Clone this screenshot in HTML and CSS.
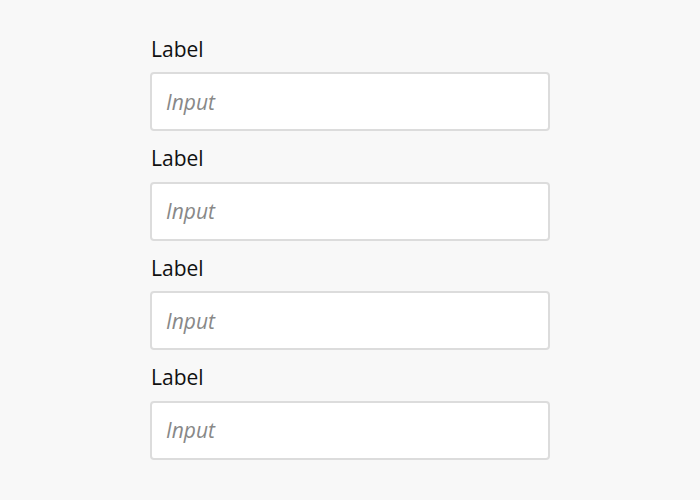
FILE: index.html
```html
<!DOCTYPE html>
<html>
<head>
<meta charset="utf-8">
<link rel="stylesheet" href="styles.css">
</head>
<body>
<form class="form">
  <div class="field">
    <label class="label">Label</label>
    <input class="input" type="text" placeholder="Input">
  </div>
  <div class="field">
    <label class="label">Label</label>
    <input class="input" type="text" placeholder="Input">
  </div>
  <div class="field">
    <label class="label">Label</label>
    <input class="input" type="text" placeholder="Input">
  </div>
  <div class="field">
    <label class="label">Label</label>
    <input class="input" type="text" placeholder="Input">
  </div>
</form>
</body>
</html>
```
FILE: styles.css
```css
html, body {
  margin: 0;
  padding: 0;
  background: #f8f8f8;
  font-family: "Open Sans", "Liberation Sans", sans-serif;
}
.form {
  width: 400px;
  margin: 0 auto;
  padding-top: 35.5px;
  display: flex;
  flex-direction: column;
  gap: 14.17px;
}
.field {
  display: flex;
  flex-direction: column;
}
.label {
  font-size: 21px;
  line-height: 26px;
  color: #111;
  margin: 0 0 10.5px 1px;
}
.input {
  box-sizing: border-box;
  width: 400px;
  height: 59px;
  margin: 0;
  padding: 0 14px;
  border: 2px solid #dcdcdc;
  border-radius: 4px;
  background: #fff;
  font-family: inherit;
  font-size: 21px;
  color: #111;
  outline: none;
}
.input::placeholder {
  color: #888;
  font-style: italic;
  opacity: 1;
}
```
